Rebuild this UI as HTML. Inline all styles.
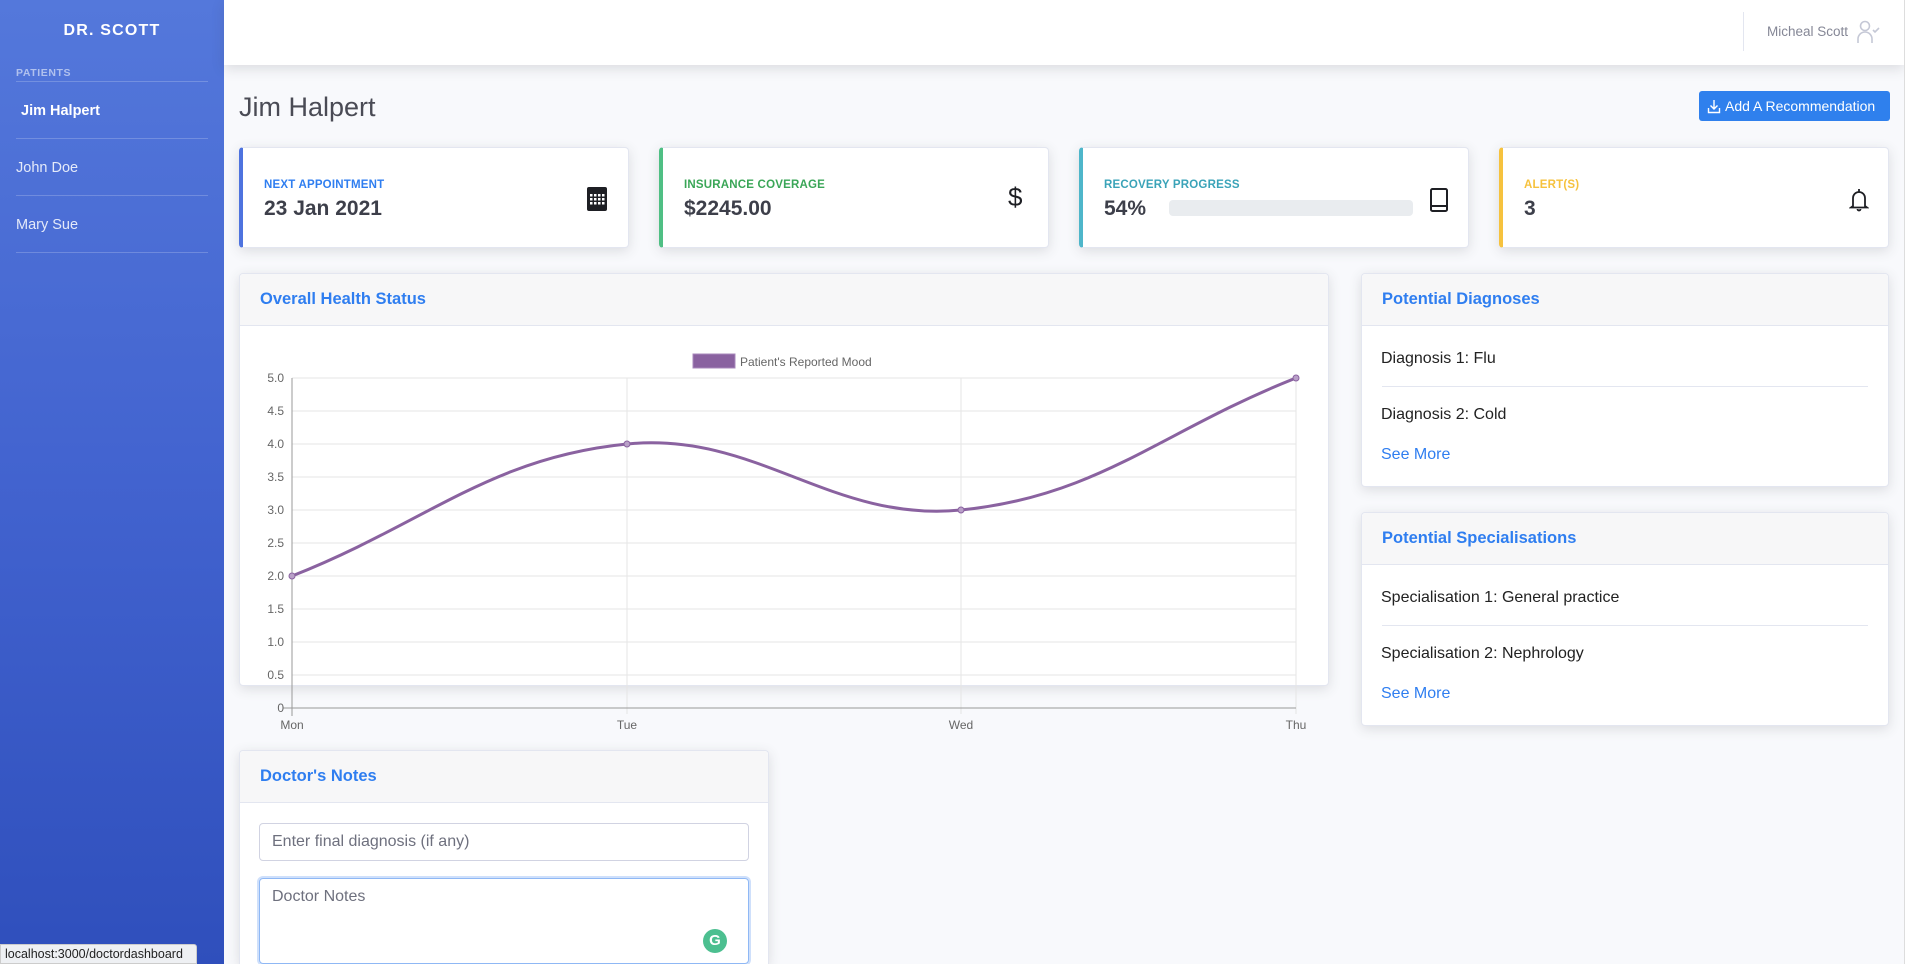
<!DOCTYPE html>
<html><head><meta charset="utf-8"><style>
*{box-sizing:border-box;margin:0;padding:0}
html{width:1910px;height:964px;overflow:hidden}
body{width:1910px;height:964px;overflow:hidden;background:#f8f9fc;font-family:"Liberation Sans",sans-serif;position:relative;color:#212529}
.a{position:absolute}
#side{left:0;top:0;width:224px;height:964px;background:linear-gradient(180deg,#5478db 0%,#4263cf 50%,#2f4fbc 100%)}
.sl{position:absolute;left:16px;width:192px;height:1px;background:rgba(255,255,255,.2)}
.card{position:absolute;background:#fff;border:1px solid #e3e6f0;border-radius:4px;box-shadow:0 3px 12px rgba(58,59,69,.15)}
.stat{top:147px;width:390px;height:101px;border-left:4px solid}
.lab{position:absolute;left:21px;top:31px;font-size:11.5px;font-weight:bold;letter-spacing:.2px}
.val{position:absolute;left:21px;top:49px;font-size:21px;font-weight:bold;color:#3d3f4a}
.hd{position:absolute;left:0;top:0;right:0;height:52px;background:#f7f7f8;border-bottom:1px solid #e3e6f0;border-radius:4px 4px 0 0}
.ht{position:absolute;left:20px;top:16px;font-size:16.5px;font-weight:bold;color:#2f7ef0}
.it{position:absolute;left:19px;font-size:16px;color:#222}
.sm{position:absolute;left:19px;font-size:16px;color:#2f7ef0}
.dv{position:absolute;left:20px;right:20px;height:1px;background:#e3e6f0}
</style></head><body>
<div id="side" class="a">
 <div class="a" style="left:0;width:224px;top:22px;text-align:center;color:#fff;font-weight:bold;font-size:16px;letter-spacing:1.2px">DR. SCOTT</div>
 <div class="a" style="left:16px;top:67px;color:rgba(255,255,255,.55);font-weight:bold;font-size:10.5px;letter-spacing:.6px">PATIENTS</div>
 <div class="sl" style="top:81px"></div>
 <div class="a" style="left:21px;top:103px;color:#fff;font-weight:bold;font-size:14.5px">Jim Halpert</div>
 <div class="sl" style="top:138px"></div>
 <div class="a" style="left:16px;top:160px;color:rgba(255,255,255,.85);font-size:14.5px">John Doe</div>
 <div class="sl" style="top:195px"></div>
 <div class="a" style="left:16px;top:217px;color:rgba(255,255,255,.85);font-size:14.5px">Mary Sue</div>
 <div class="sl" style="top:252px"></div>
</div>
<div class="a" style="left:224px;top:0;width:1680px;height:65px;background:#fff;box-shadow:0 4px 12px rgba(58,59,69,.15)"></div>
<div class="a" style="left:1904px;top:0;width:6px;height:964px;background:#fff;border-left:1px solid #ddd"></div>
<div class="a" style="left:1743px;top:12px;width:1px;height:39px;background:#e3e6f0"></div>
<div class="a" style="left:1767px;top:24px;font-size:13.5px;color:#858796">Micheal Scott</div>
<svg class="a" style="left:1855px;top:19px" width="26" height="26" viewBox="0 0 26 26" fill="none" stroke="#c5c8d6" stroke-width="1.6"><circle cx="10" cy="7" r="4.5"/><path d="M3 24v-4a7 7 0 0 1 14 0v4"/><path d="M18 11l2 2 4-4"/></svg>
<div class="a" style="left:239px;top:92px;font-size:27px;color:#4a4b55">Jim Halpert</div>
<div class="a" style="left:1699px;top:91px;width:191px;height:30px;background:#2f80ed;border-radius:3px;color:#fff;font-size:14px;padding:7px 0 0 26px">Add A Recommendation</div>
<svg class="a" style="left:1707px;top:98px" width="14" height="16" viewBox="0 0 14 16" fill="none" stroke="#fff" stroke-width="1.4"><path d="M7 2v9M3.5 7.5L7 11l3.5-3.5M1.5 10v4.5h11V10"/></svg>

<div class="card stat" style="left:239px;border-left-color:#4e73df"><div class="lab" style="color:#2f7ef0">NEXT APPOINTMENT</div><div class="val">23 Jan 2021</div>
<svg class="a" style="left:344px;top:39px" width="20" height="24" viewBox="0 0 20 24"><rect x="0" y="0" width="20" height="24" rx="2" fill="#1e1f24"/><g fill="#fff"><rect x="3" y="7" width="2.5" height="2.5"/><rect x="7" y="7" width="2.5" height="2.5"/><rect x="11" y="7" width="2.5" height="2.5"/><rect x="15" y="7" width="2.5" height="2.5"/><rect x="3" y="11" width="2.5" height="2.5"/><rect x="7" y="11" width="2.5" height="2.5"/><rect x="11" y="11" width="2.5" height="2.5"/><rect x="15" y="11" width="2.5" height="2.5"/><rect x="3" y="15" width="2.5" height="2.5"/><rect x="7" y="15" width="2.5" height="2.5"/><rect x="11" y="15" width="2.5" height="2.5"/><rect x="15" y="15" width="2.5" height="2.5"/></g></svg></div>
<div class="card stat" style="left:659px;border-left-color:#4fbf84"><div class="lab" style="color:#3aa657">INSURANCE COVERAGE</div><div class="val">$2245.00</div>
<div class="a" style="left:345px;top:34px;font-size:26px;color:#1e1f24">$</div></div>
<div class="card stat" style="left:1079px;border-left-color:#4eb6ca"><div class="lab" style="color:#3aa3b8">RECOVERY PROGRESS</div><div class="val">54%</div>
<div class="a" style="left:86px;top:52px;width:244px;height:16px;background:#e9ecef;border-radius:4px"></div>
<svg class="a" style="left:346px;top:40px" width="20" height="24" viewBox="0 0 20 24" fill="none" stroke="#1e1f24" stroke-width="2"><rect x="2" y="1" width="16" height="22" rx="1.5"/><path d="M2 18h16"/></svg></div>
<div class="card stat" style="left:1499px;border-left-color:#f6c23e"><div class="lab" style="color:#f6c23e">ALERT(S)</div><div class="val">3</div>
<svg class="a" style="left:346px;top:40px" width="20" height="24" viewBox="0 0 20 24" fill="none" stroke="#1e1f24" stroke-width="1.8"><path d="M4 18V10a6 6 0 0 1 12 0v8l2 1.5H2z"/><path d="M10 1v3M8.5 21a1.5 1.5 0 0 0 3 0"/></svg></div>

<div class="card" style="left:239px;top:273px;width:1090px;height:413px"><div class="hd"><div class="ht">Overall Health Status</div></div></div>
<svg class="a" style="left:239px;top:340px;overflow:visible" width="1100" height="400">
<g transform="translate(-239,-340)" font-family="Liberation Sans" font-size="12" fill="#666">
<g stroke="#e5e5e5" stroke-width="1">
<line x1="292" x2="1296" y1="378" y2="378"/><line x1="292" x2="1296" y1="411" y2="411"/><line x1="292" x2="1296" y1="444" y2="444"/><line x1="292" x2="1296" y1="477" y2="477"/><line x1="292" x2="1296" y1="510" y2="510"/><line x1="292" x2="1296" y1="543" y2="543"/><line x1="292" x2="1296" y1="576" y2="576"/><line x1="292" x2="1296" y1="609" y2="609"/><line x1="292" x2="1296" y1="642" y2="642"/><line x1="292" x2="1296" y1="675" y2="675"/>
<line x1="627" x2="627" y1="378" y2="714"/><line x1="961" x2="961" y1="378" y2="714"/><line x1="1296" x2="1296" y1="378" y2="714"/>
</g>
<g stroke="#999" stroke-width="1"><line x1="292" x2="292" y1="378" y2="716"/><line x1="283" x2="1296" y1="708" y2="708"/></g>
<g text-anchor="end"><text x="284" y="382">5.0</text><text x="284" y="415">4.5</text><text x="284" y="448">4.0</text><text x="284" y="481">3.5</text><text x="284" y="514">3.0</text><text x="284" y="547">2.5</text><text x="284" y="580">2.0</text><text x="284" y="613">1.5</text><text x="284" y="646">1.0</text><text x="284" y="679">0.5</text><text x="284" y="712">0</text></g>
<g text-anchor="middle"><text x="292" y="729">Mon</text><text x="627" y="729">Tue</text><text x="961" y="729">Wed</text><text x="1296" y="729">Thu</text></g>
<rect x="693" y="354" width="42" height="14" fill="#8a62a0" stroke="#a888bb"/>
<text x="740" y="366">Patient's Reported Mood</text>
<path d="M292,576 C426,523.2 489.5,457.6 627,444 C757,431.2 831,522.8 961,510 C1098.5,496.4 1162,430.8 1296,378" fill="none" stroke="#8a62a0" stroke-width="3"/>
<g fill="#b9a0c8" stroke="#8a62a0"><circle cx="292" cy="576" r="3"/><circle cx="627" cy="444" r="3"/><circle cx="961" cy="510" r="3"/><circle cx="1296" cy="378" r="3"/></g>
</g></svg>

<div class="card" style="left:1361px;top:273px;width:528px;height:214px"><div class="hd"><div class="ht">Potential Diagnoses</div></div>
<div class="it" style="top:76px">Diagnosis 1: Flu</div><div class="dv" style="top:112px"></div>
<div class="it" style="top:132px">Diagnosis 2: Cold</div><div class="sm" style="top:172px">See More</div></div>
<div class="card" style="left:1361px;top:512px;width:528px;height:214px"><div class="hd"><div class="ht">Potential Specialisations</div></div>
<div class="it" style="top:76px">Specialisation 1: General practice</div><div class="dv" style="top:112px"></div>
<div class="it" style="top:132px">Specialisation 2: Nephrology</div><div class="sm" style="top:172px">See More</div></div>

<div class="card" style="left:239px;top:750px;width:530px;height:214px;border-bottom:none;border-radius:4px 4px 0 0"><div class="hd"><div class="ht">Doctor's Notes</div></div>
<div class="a" style="left:19px;top:72px;width:490px;height:38px;border:1px solid #d1d3e2;border-radius:4px;font-size:16px;color:#6e707e;padding:9px 12px">Enter final diagnosis (if any)</div>
<div class="a" style="left:19px;top:127px;width:490px;height:86px;border:1px solid #8fb8f5;box-shadow:0 0 0 2px #cfe0fb;border-radius:4px;font-size:16px;color:#6e707e;padding:9px 12px">Doctor Notes</div>
<div class="a" style="left:463px;top:178px;width:24px;height:24px;border-radius:50%;background:#4cbf90;color:#fff;font-weight:bold;font-size:15px;text-align:center;line-height:24px">G</div>
</div>
<div class="a" style="left:0;top:944px;width:197px;height:20px;background:#eef0f3;border:1px solid #ccc;border-radius:0 3px 0 0;font-size:12.5px;color:#222;padding:2px 4px">localhost:3000/doctordashboard</div>
</body></html>
